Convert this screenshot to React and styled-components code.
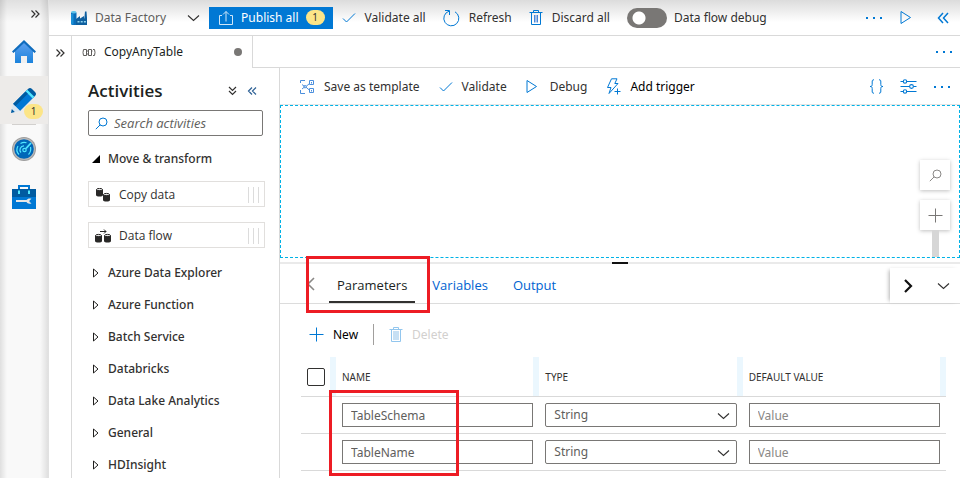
import React from "react";
import styled, { createGlobalStyle, css } from "styled-components";

const GlobalStyle = createGlobalStyle`
  *, *::before, *::after { box-sizing: border-box; }
  html, body, #root { height: 100%; }
  body {
    margin: 0;
    overflow: hidden;
    background: #fff;
    color: #323130;
    font: 12px/18px "Noto Sans", "Open Sans", sans-serif;
  }
  button, input, select { font: inherit; color: inherit; }
  h2, ul { margin: 0; padding: 0; }
  svg { display: block; flex: none; }
`;

const blue = "#0078d4";
const line = "#d9d9d9";

/* ---------- layout ---------- */

const Shell = styled.div`
  display: flex;
  height: 100vh;
`;

const Rail = styled.nav`
  display: flex;
  flex-direction: column;
  flex: none;
  width: 49px;
  background:
    linear-gradient(to bottom, rgba(0, 0, 0, 0.1), transparent 22px),
    linear-gradient(to right, rgba(0, 0, 0, 0.1), transparent 7px),
    linear-gradient(to left, rgba(0, 0, 0, 0.1), transparent 8px),
    #f9f9f9;
  border-right: 1px solid #e1e1e1;
`;

const Workspace = styled.div`
  display: flex;
  flex-direction: column;
  flex: 1;
  min-width: 0;
`;

const Body = styled.div`
  display: flex;
  flex: 1;
  min-height: 0;
`;

const Editor = styled.div`
  display: flex;
  flex-direction: column;
  flex: 1;
  min-width: 0;
`;

const Split = styled.div`
  display: flex;
  flex: 1;
  min-height: 0;
`;

const Main = styled.main`
  display: flex;
  flex-direction: column;
  flex: 1;
  min-width: 0;
`;

const Spacer = styled.div`
  flex: 1;
`;

/* ---------- buttons ---------- */

const PlainButton = styled.button`
  display: flex;
  align-items: center;
  gap: ${(p) => p.$gap || 9}px;
  padding: 0;
  border: 0;
  background: none;
  white-space: nowrap;
  cursor: pointer;
  color: ${(p) => p.$color || "inherit"};
`;

const RailButton = styled(PlainButton)`
  position: relative;
  justify-content: center;
  flex: none;
  height: 48px;
  ${(p) => p.$active && css`background: #edebe9;`}
`;

const RailToggle = styled(PlainButton)`
  justify-content: flex-end;
  height: 28px;
  padding-right: 7px;
`;

const RailRule = styled.hr`
  width: 24px;
  height: 1px;
  margin: 0 auto;
  border: 0;
  background: #d2d0ce;
`;

const Count = styled.span`
  display: flex;
  align-items: center;
  justify-content: center;
  min-width: 19px;
  height: 15px;
  border-radius: 8px;
  background: #fce588;
  color: #323130;
  font-size: 10px;
  line-height: 15px;
`;

const RailCount = styled(Count)`
  position: absolute;
  right: 5px;
  bottom: 5px;
`;

const PublishButton = styled(PlainButton)`
  gap: 7px;
  height: 22px;
  padding: 0 8px 0 9px;
  background: ${blue};
  color: #fff;
`;

/* ---------- top bar ---------- */

const TopBar = styled.header`
  display: flex;
  align-items: center;
  flex: none;
  gap: 17px;
  height: 36px;
  padding: 0 11px 0 22px;
  background: linear-gradient(to bottom, #dcdcdc, #fff 22px);
  border-bottom: 1px solid ${line};
`;

const Service = styled(PlainButton)`
  gap: 8px;
  color: #605e5c;
`;

const ServiceChevron = styled.span`
  margin-left: 13px;
`;

const SwitchLabel = styled.label`
  display: flex;
  align-items: center;
  gap: 7px;
  white-space: nowrap;
`;

const Switch = styled.input`
  appearance: none;
  width: 40px;
  height: 20px;
  margin: 0;
  border-radius: 10px;
  background: radial-gradient(circle at 12px 10px, #fff 6px, transparent 7px) #797775;
`;

const Actions = styled.div`
  display: flex;
  align-items: center;
  gap: ${(p) => p.$gap}px;
`;

const TopActions = styled(Actions)`
  margin-right: 8px;
`;

/* ---------- document tabs ---------- */

const ExpandStrip = styled.aside`
  display: flex;
  justify-content: center;
  align-items: flex-start;
  flex: none;
  width: 23px;
  padding-top: 12px;
  border-right: 1px solid ${line};
`;

const DocTabs = styled.div`
  display: flex;
  flex: none;
  height: 32px;
`;

const DocTab = styled(PlainButton)`
  gap: 8px;
  width: 181px;
  padding: 0 10px;
  border-right: 1px solid ${line};
  color: #201f1e;
`;

const DirtyDot = styled.span`
  width: 8px;
  height: 8px;
  margin-left: auto;
  border-radius: 50%;
  background: #797775;
`;

const DocTabsRest = styled.div`
  display: flex;
  align-items: center;
  justify-content: flex-end;
  flex: 1;
  padding-right: 8px;
  border-bottom: 1px solid ${line};
`;

/* ---------- activities ---------- */

const Activities = styled.section`
  flex: none;
  width: 208px;
  padding: 0 14px 0 16px;
  border-right: 1px solid ${line};
  overflow: hidden;
`;

const ActivitiesHead = styled.div`
  display: flex;
  align-items: center;
  gap: 9px;
  height: 42px;
  padding: 3px 7px 0 0;
`;

const Title = styled.h2`
  flex: 1;
  font-family: "Open Sans", sans-serif;
  font-size: 17px;
  font-weight: 600;
  line-height: 24px;
  color: #201f1e;
`;

const SearchBox = styled.label`
  display: flex;
  align-items: center;
  gap: 6px;
  width: 175px;
  height: 26px;
  padding: 0 6px;
  border: 1px solid #797775;
  border-radius: 2px;
`;

const SearchInput = styled.input`
  flex: 1;
  min-width: 0;
  padding: 0;
  border: 0;
  outline: 0;
  background: none;
  font-family: "Open Sans", sans-serif;
  font-size: 13px;
  &::placeholder { color: #605e5c; font-style: italic; }
`;

const GroupButton = styled(PlainButton)`
  gap: 8px;
  width: 100%;
  height: 32px;
  padding-left: 4px;
  font-weight: 500;
`;

const GroupBlock = styled.div`
  padding: 7px 0 0;
`;

const Cards = styled.div`
  display: flex;
  flex-direction: column;
  gap: 15px;
  padding: 6px 0 9px;
`;

const Card = styled(PlainButton)`
  gap: 8px;
  width: 177px;
  height: 26px;
  padding: 1px 5px 0 6px;
  border: 1px solid #e1dfdd;
  font-family: "Open Sans", sans-serif;
`;

const Grip = styled.span`
  width: 11px;
  height: 16px;
  margin-left: auto;
  background: repeating-linear-gradient(to right, #dcdcdc 0 1px, transparent 1px 5px);
`;

/* ---------- pipeline toolbar and canvas ---------- */

const PipelineBar = styled.div`
  display: flex;
  align-items: center;
  flex: none;
  gap: 19px;
  height: 37px;
  padding: 1px 10px 0 19px;
  border-bottom: 1px solid #e5e5e5;
`;

const Canvas = styled.div`
  display: flex;
  flex-direction: column;
  align-items: flex-end;
  justify-content: flex-end;
  flex: none;
  height: 153px;
  padding-right: 9px;
  border: 1px dashed #00b2e6;
`;

const CanvasTool = styled(PlainButton)`
  justify-content: center;
  width: 30px;
  height: 30px;
  margin-top: 10px;
  background: #fff;
  box-shadow: 0 1px 4px rgba(0, 0, 0, 0.25);
`;

const ZoomTrack = styled.div`
  width: 7px;
  height: 27px;
  margin-right: 11px;
  background: #d6d6d6;
`;

const Splitter = styled.div`
  display: flex;
  align-items: flex-end;
  justify-content: center;
  flex: none;
  height: 6px;
  border-bottom: 2px solid #eaeaea;
`;

const SplitterHandle = styled.span`
  width: 16px;
  height: 2px;
  margin-bottom: -2px;
  background: #111;
`;

/* ---------- property panel ---------- */

const PanelTabs = styled.div`
  display: flex;
  align-items: stretch;
  flex: none;
  height: 40px;
  padding-left: 26px;
  border-bottom: 1px solid #dcdcdc;
`;

const Mark = styled.span`
  position: absolute;
  border: 3px solid #ed1c24;
  pointer-events: none;
`;

const PanelTab = styled.button`
  position: relative;
  height: 39px;
  padding: 3px 8px 0;
  border: 0;
  background: none;
  font-family: "Open Sans", sans-serif;
  font-size: 13px;
  color: ${(p) => (p.$active ? "#201f1e" : "#0063d1")};
  font-weight: ${(p) => (p.$active ? 500 : 400)};
  ${(p) => p.$active && css`box-shadow: inset 0 -2px #323130;`}
`;

const TabMark = styled(Mark)`
  inset: -8px -15px -10px -23px;
`;

const PanelTabList = styled.div`
  display: flex;
  gap: 9px;
  margin-left: 14px;
`;

const TabArrows = styled.div`
  display: flex;
  align-items: center;
  gap: 24px;
  margin-left: auto;
  margin-top: 4px;
  padding: 0 10px 0 14px;
  box-shadow: -3px 0 4px -2px rgba(0, 0, 0, 0.3);
`;

const RowActions = styled.div`
  display: flex;
  align-items: center;
  gap: 15px;
  padding: 20px 29px 12px;
`;

const Divider = styled.span`
  width: 1px;
  height: 21px;
  background: #a19f9d;
`;

const TableWrap = styled.div`
  position: relative;
  padding: 0 14px 0 21px;
`;

const Table = styled.table`
  width: 100%;
  table-layout: fixed;
  border-collapse: separate;
  border-spacing: 0;
`;

const HeadCell = styled.th`
  height: 40px;
  padding: 0 0 0 6px;
  border-bottom: 1px solid ${line};
  background: linear-gradient(#ebf7fe, #ebf7fe) right / 6px 100% no-repeat;
  font-size: 10px;
  font-weight: 400;
  text-align: left;
`;

const CheckCell = styled(HeadCell)`
  width: 35px;
`;

const Cell = styled.td`
  height: 37px;
  padding: 0 6px;
  border-bottom: 1px solid ${line};
`;

const Check = styled.input`
  display: block;
  appearance: none;
  width: 18px;
  height: 18px;
  margin: 0;
  border: 1px solid #323130;
  border-radius: 2px;
`;

const Field = styled.input`
  display: block;
  width: 100%;
  height: 24px;
  padding: 0 8px;
  border: 1px solid #797775;
  border-radius: 0;
  outline: 0;
  background: #fff;
  color: #605e5c;
  &::placeholder { color: #8a8886; }
`;

const SelectWrap = styled.div`
  position: relative;
  svg { position: absolute; right: 7px; top: 9px; pointer-events: none; }
`;

const SelectField = styled(Field)`
  appearance: none;
  border-radius: 2px;
`;

const RowMark = styled(Mark)`
  left: 49px;
  top: 33px;
  width: 130px;
  bottom: -5px;
`;

/* ---------- icons ---------- */

const Svg = ({ w = 16, h = w, c = blue, s = 1, children }) => (
  <svg width={w} height={h} viewBox={`0 0 ${w} ${h}`} fill="none" stroke={c} strokeWidth={s} aria-hidden="true">
    {children}
  </svg>
);

const DoubleChevron = ({ dir = "right", c = blue, s = 1.2 }) => (
  <Svg w={11} h={10} c={c} s={s}>
    {dir === "right" && <path d="M1.5 1.5 5 5 1.5 8.500M5.500 1.500 9 5 5.500 8.500" />}
    {dir === "left" && <path d="M5 1.500 1.500 5 5 8.500M9 1.500 5.500 5 9 8.500" />}
    {dir === "down" && <path d="M2 1 5.500 4.500 9 1M2 5 5.500 8.500 9 5" />}
  </Svg>
);

const TopCollapseIcon = () => (
  <Svg w={12} h={12} s={1.5}><path d="M6 1 1.500 6 6 11M11 1 6.500 6 11 11" /></Svg>
);

const ChevronDown = ({ c = "#323130" }) => (
  <Svg w={13} h={8} c={c} s={1.1}><path d="m1 1.500 5.500 5 5.500-5" /></Svg>
);

const Dots = () => (
  <Svg w={17} h={4}>
    <g fill={blue} stroke="none">
      <path d="M1 1h2v2H1zM8 1h2v2H8zM15 1h2v2h-2z" />
    </g>
  </Svg>
);

const FactoryIcon = () => (
  <Svg w={16} h={16} c="none">
    <path d="M0 2.500h5.500V15H1l-1-1z" fill="#0a6cb8" />
    <path d="M0 4h2.500v10.500H1L0 14z" fill="#1b8fd6" />
    <ellipse cx="2.700" cy="2.200" rx="2.700" ry="1.200" fill="#5fc3ea" />
    <path d="M5 9 9 6v2.500L13 6v2.500h.3L14 1.500h1.500L16 8v7H5z" fill="#0f5f9f" />
    <path d="M6.500 11h2v1.500h-2zM9.700 11h2v1.500h-2zM12.900 11h2v1.500h-2z" fill="#8fd3ef" />
  </Svg>
);

const PublishIcon = () => (
  <Svg w={16} h={16} c="#cfe6f8">
    <path d="M4 5.500H1.500v9h13v-9H12M8 11.500v-10M5 4.500l3-3 3 3" />
  </Svg>
);

const CheckIcon = () => <Svg w={14} h={12}><path d="M1 6.500 4.500 10 13 1.500" /></Svg>;

const RefreshIcon = () => (
  <Svg w={17} h={18}>
    <path d="M6 2.200a7.500 7.500 0 1 0 6 .6M2 1.500h4.500V6" />
  </Svg>
);

const TrashIcon = ({ filled }) => (
  <Svg w={14} h={17} c={filled ? "#92c6ee" : blue}>
    <path d="M.5 3.500h13M4.500 3.500v-2h5v2M2.500 3.500v12h9v-12" />
    {filled ? <path d="M4 5h6v9H4z" fill="#c7e0f4" stroke="none" /> : <path d="M5.500 6v7.500M7 6v7.500M8.500 6v7.500" stroke="#4a86d8" />}
  </Svg>
);

const PlayIcon = () => <Svg w={12} h={15}><path d="M1 1.500v12l9.500-6z" /></Svg>;

const TemplateIcon = () => (
  <Svg w={16} h={16} c="#4b8fdd">
    <path d="M1.500 4V1.500H6M1.500 11v3.500H6M3 5.500l2.500 2M3 10l2.500-2M7 7.500l3.500-3M7 8.200l3.500 3" />
    <circle cx="6" cy="7.700" r="1.200" />
    <path d="M10.500 1.500h4v4h-4zM10.500 9.500h4v4h-4zM12.500 3v1.500M12.500 11v1.500" />
  </Svg>
);

const BoltIcon = () => (
  <Svg w={15} h={17}>
    <path d="M5.500.8h5.500L8.800 5.500H12L3 15.500l2-6H1.500zM11.500 10.500v6M8.500 13.500h6" />
  </Svg>
);

const SlidersIcon = () => (
  <Svg w={17} h={15} s={1.1}>
    <path d="M.5 2.500h2.800M6.800 2.500h9.700M.5 7.500h9M13.500 7.500h3M.5 12.500h2.800M6.800 12.500h9.700" />
    <circle cx="5" cy="2.500" r="1.700" />
    <circle cx="11.500" cy="7.500" r="1.900" />
    <circle cx="5" cy="12.500" r="1.700" />
  </Svg>
);

const BracesIcon = () => (
  <Svg w={15} h={15}>
    <path d="M5 .8C3.200.8 3.200 1.500 3.200 3v2.500C3.200 7 2.500 7.500 1 7.500c1.500 0 2.200.5 2.200 2V12c0 1.500 0 2.200 1.800 2.200M10 .8c1.800 0 1.800.7 1.800 2.200v2.500c0 1.500.7 2 2.200 2-1.500 0-2.200.5-2.200 2V12c0 1.500 0 2.200-1.800 2.200" />
  </Svg>
);

const SearchIcon = ({ c = blue }) => (
  <Svg w={13} h={13} c={c}>
    <circle cx="8" cy="5" r="4" />
    <path d="M5.200 7.800.8 12.200" />
  </Svg>
);

const PlusIcon = ({ c = blue }) => <Svg w={15} h={15} c={c}><path d="M7.500.5v14M.5 7.500h14" /></Svg>;

const PipelineIcon = () => (
  <Svg w={14} h={9} c="#605e5c">
    <path d="M1.500 1.500q-1 3 0 6h3v-6zM4.500 3h2M4.500 6h2M6.500 1.500h3v6h-3zM9.500 3h1M11 1.500h1.500q1 3 0 6H11" />
  </Svg>
);

const HomeIcon = () => (
  <Svg w={24} h={24} c="none">
    <defs>
      <linearGradient id="home" x1="0" y1="0" x2="0" y2="1">
        <stop offset="0" stopColor="#5ea0ef" />
        <stop offset="1" stopColor="#1b83dc" />
      </linearGradient>
    </defs>
    <path d="M12 2 21 11v12h-6v-7H9v7H3V11z" fill="url(#home)" />
    <path d="M9 16h6v7H9z" fill="#f0f0f0" />
    <path d="M12 0 24 11.500 22.500 13 12 3 1.500 13 0 11.500z" fill="#0f6cbd" />
  </Svg>
);

const PencilIcon = () => (
  <Svg w={26} h={26} c="none">
    <path d="M17 2q2-2 4 0l3 3q2 2 0 4l-2.500 2.500-7-7z" fill="#005ba1" />
    <path d="m14.500 4.500 1.800-1.700 7 7-1.800 1.700z" fill="#50e6ff" />
    <path d="m14.500 4.500 7 7L9 24l-7-7z" fill="#0078d4" />
    <path d="m14.500 4.500 2.300 2.300L4.300 19.300 2 17z" fill="#005ba1" />
    <path d="M2 17 9 24 0 26z" fill="#d8e6f2" />
    <path d="m.8 22 3 3L0 26z" fill="#005ba1" />
  </Svg>
);

const GaugeIcon = () => (
  <Svg w={24} h={24} c="none">
    <circle cx="12" cy="12" r="12" fill="#9d9d9d" />
    <circle cx="12" cy="12" r="11" fill="#b9b9b9" />
    <circle cx="12" cy="12" r="9.800" fill="#0067b8" />
    <g fill="none" stroke="#50e6ff" strokeWidth="1.200">
      <path d="M7 17.500a7 7 0 0 1-1-8.500M8.500 6.500q3-1.800 6-.7M18.500 10q1 4.500-2 7.500M9 15.500A4 4 0 0 1 12 8.800" />
      <circle cx="12.500" cy="13" r="1.700" />
      <path d="m14 11.500 5-5.500" strokeWidth="1.800" />
    </g>
  </Svg>
);

const ToolboxIcon = () => (
  <Svg w={24} h={24} c="none">
    <path d="M7 5V1h10v4" stroke="#0078d4" strokeWidth="2" />
    <path d="M0 4h24v20H0z" fill="#0078d4" />
    <path d="M0 4h24v8H0z" fill="#005ba1" />
    <path d="M6 5.500h2V9H6zM16 5.500h2V9h-2z" fill="#50e6ff" />
    <path d="M4 15h10.500c1-1.500 3-2 5-1.200L17.500 15.500v1.500l2 1.200c-2 1-4 .5-5-1.200H4z" fill="#e6e6e6" />
  </Svg>
);

const Cylinder = ({ x, y }) => (
  <g transform={`translate(${x} ${y})`}>
    <path d="M0 1.500v5.500c0 2 7 2 7 0V1.500" fill="#292827" stroke="none" />
    <ellipse cx="3.500" cy="1.500" rx="3" ry="1.100" fill="#e6e6e6" stroke="#292827" />
  </g>
);

const CopyDataIcon = () => (
  <Svg w={16} h={14} c="#292827">
    <Cylinder x={1} y={0} />
    <Cylinder x={8} y={5} />
  </Svg>
);

const DataFlowIcon = () => (
  <Svg w={16} h={14} c="#292827">
    <Cylinder x={0} y={5} />
    <Cylinder x={9} y={5} />
    <path d="M5 2.500h6M9 .5l2 2-2 2" />
  </Svg>
);

const GroupClosed = () => <Svg w={8} h={10} c="#201f1e"><path d="M1.500 1v8l4.500-4z" /></Svg>;
const GroupOpen = () => <Svg w={8} h={8} c="none"><path d="M8 0v8H0z" fill="#000" /></Svg>;

/* ---------- content ---------- */

const groups = [
  "Azure Data Explorer",
  "Azure Function",
  "Batch Service",
  "Databricks",
  "Data Lake Analytics",
  "General",
  "HDInsight",
];

const parameters = ["TableSchema", "TableName"];

const ParameterRow = ({ name }) => (
  <tr>
    <Cell />
    <Cell><Field aria-label="Name" defaultValue={name} /></Cell>
    <Cell>
      <SelectWrap>
        <SelectField as="select" aria-label={`Type of ${name}`} defaultValue="String">
          <option>String</option>
        </SelectField>
        <ChevronDown />
      </SelectWrap>
    </Cell>
    <Cell><Field aria-label={`Default value of ${name}`} placeholder="Value" /></Cell>
  </tr>
);

export default function App() {
  return (
    <Shell>
      <GlobalStyle />
      <Rail>
        <RailToggle aria-label="Expand menu"><DoubleChevron c="#323130" /></RailToggle>
        <RailButton aria-label="Home"><HomeIcon /></RailButton>
        <RailButton aria-label="Author" $active>
          <PencilIcon />
          <RailCount>1</RailCount>
        </RailButton>
        <RailRule />
        <RailButton aria-label="Monitor"><GaugeIcon /></RailButton>
        <RailButton aria-label="Manage"><ToolboxIcon /></RailButton>
      </Rail>
      <Workspace>
        <TopBar>
          <Actions $gap={9}>
            <Service>
              <FactoryIcon />
              Data Factory
              <ServiceChevron><ChevronDown /></ServiceChevron>
            </Service>
            <PublishButton><PublishIcon />Publish all<Count>1</Count></PublishButton>
            <PlainButton><CheckIcon />Validate all</PlainButton>
          </Actions>
          <PlainButton><RefreshIcon />Refresh</PlainButton>
          <PlainButton><TrashIcon />Discard all</PlainButton>
          <SwitchLabel><Switch type="checkbox" role="switch" />Data flow debug</SwitchLabel>
          <Spacer />
          <TopActions $gap={18}>
            <PlainButton aria-label="More"><Dots /></PlainButton>
            <PlainButton aria-label="Run"><PlayIcon /></PlainButton>
          </TopActions>
          <PlainButton aria-label="Collapse"><TopCollapseIcon /></PlainButton>
        </TopBar>
        <Body>
          <ExpandStrip>
            <PlainButton aria-label="Expand resources"><DoubleChevron c="#323130" /></PlainButton>
          </ExpandStrip>
          <Editor>
            <DocTabs>
              <DocTab><PipelineIcon />CopyAnyTable<DirtyDot /></DocTab>
              <DocTabsRest>
                <PlainButton aria-label="More tabs"><Dots /></PlainButton>
              </DocTabsRest>
            </DocTabs>
            <Split>
              <Activities>
                <ActivitiesHead>
                  <Title>Activities</Title>
                  <PlainButton aria-label="Expand all"><DoubleChevron dir="down" c="#323130" /></PlainButton>
                  <PlainButton aria-label="Collapse pane"><DoubleChevron dir="left" c="#2b5f94" /></PlainButton>
                </ActivitiesHead>
                <SearchBox>
                  <SearchIcon />
                  <SearchInput aria-label="Search activities" placeholder="Search activities" />
                </SearchBox>
                <GroupBlock>
                  <GroupButton><GroupOpen />Move &amp; transform</GroupButton>
                  <Cards>
                    <Card><CopyDataIcon />Copy data<Grip /></Card>
                    <Card><DataFlowIcon />Data flow<Grip /></Card>
                  </Cards>
                  {groups.map((g) => (
                    <GroupButton key={g}><GroupClosed />{g}</GroupButton>
                  ))}
                </GroupBlock>
              </Activities>
              <Main>
                <PipelineBar>
                  <PlainButton><TemplateIcon />Save as template</PlainButton>
                  <PlainButton><CheckIcon />Validate</PlainButton>
                  <PlainButton $gap={12}><PlayIcon />Debug</PlainButton>
                  <PlainButton $color="#000"><BoltIcon />Add trigger</PlainButton>
                  <Spacer />
                  <Actions $gap={16}>
                    <PlainButton aria-label="Code"><BracesIcon /></PlainButton>
                    <PlainButton aria-label="Properties"><SlidersIcon /></PlainButton>
                    <PlainButton aria-label="More actions"><Dots /></PlainButton>
                  </Actions>
                </PipelineBar>
                <Canvas>
                  <CanvasTool aria-label="Search canvas"><SearchIcon c="#8a8886" /></CanvasTool>
                  <CanvasTool aria-label="Zoom in"><PlusIcon c="#797775" /></CanvasTool>
                  <ZoomTrack />
                </Canvas>
                <Splitter><SplitterHandle /></Splitter>
                <PanelTabs>
                  <PlainButton aria-label="Previous tab">
                    <Svg w={9} h={14} c="#8a8886" s={1.6}><path d="M8 1 2 7l6 6" /></Svg>
                  </PlainButton>
                  <PanelTabList>
                    <PanelTab $active>Parameters<TabMark /></PanelTab>
                    <PanelTab>Variables</PanelTab>
                    <PanelTab>Output</PanelTab>
                  </PanelTabList>
                  <TabArrows>
                    <PlainButton aria-label="Next tab">
                      <Svg w={9} h={14} c="#111" s={2.2}><path d="m1 1 6 6-6 6" /></Svg>
                    </PlainButton>
                    <PlainButton aria-label="Collapse panel"><ChevronDown /></PlainButton>
                  </TabArrows>
                </PanelTabs>
                <RowActions>
                  <PlainButton $color="#000"><PlusIcon />New</PlainButton>
                  <Divider />
                  <PlainButton $color="#d2d0ce" disabled><TrashIcon filled />Delete</PlainButton>
                </RowActions>
                <TableWrap>
                  <Table>
                    <thead>
                      <tr>
                        <CheckCell><Check type="checkbox" aria-label="Select all" /></CheckCell>
                        <HeadCell>NAME</HeadCell>
                        <HeadCell>TYPE</HeadCell>
                        <HeadCell>DEFAULT VALUE</HeadCell>
                      </tr>
                    </thead>
                    <tbody>
                      {parameters.map((p) => <ParameterRow key={p} name={p} />)}
                    </tbody>
                  </Table>
                  <RowMark />
                </TableWrap>
              </Main>
            </Split>
          </Editor>
        </Body>
      </Workspace>
    </Shell>
  );
}
